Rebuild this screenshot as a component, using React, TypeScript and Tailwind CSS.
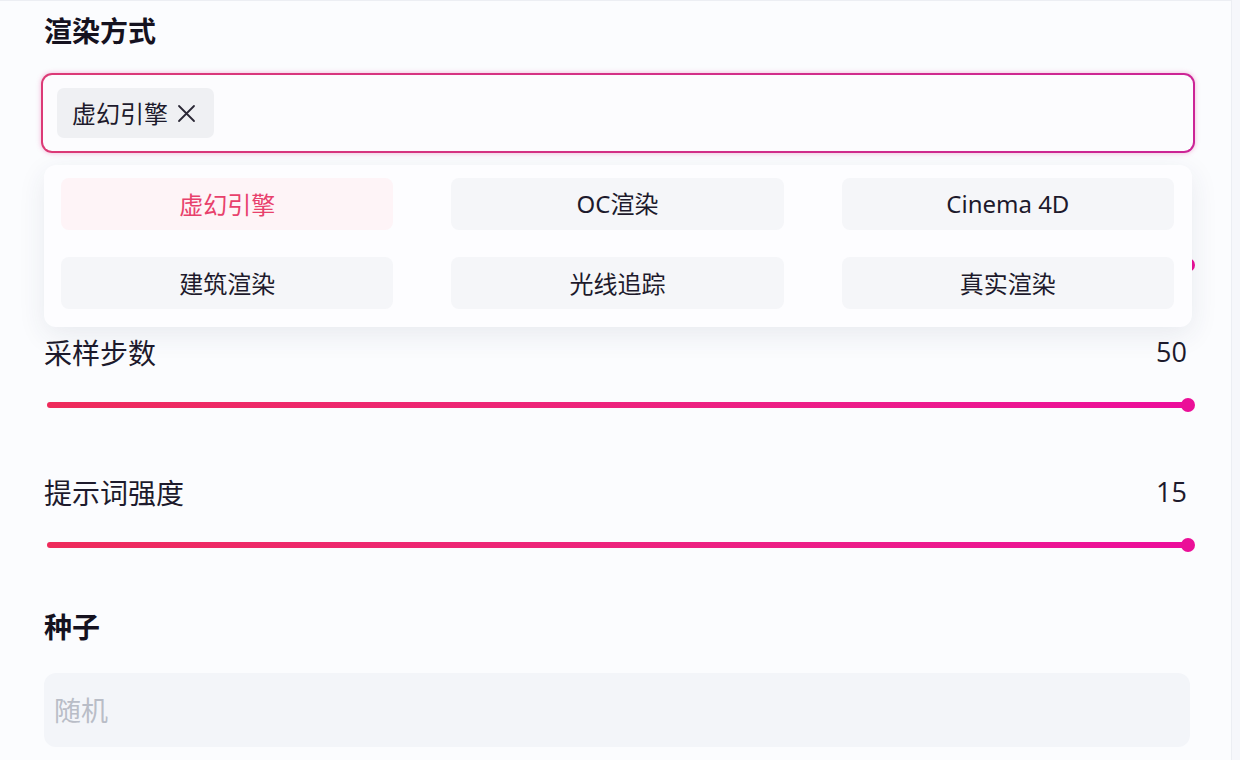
import React from "react";

const CJK = { fontFamily: '"Noto Sans CJK SC", "Noto Sans", sans-serif' };

function Slider({ label, value }: { label: string; value: string }) {
  return (
    <div className="flex flex-col">
      <div className="flex items-center justify-between h-[36px]">
        <span className="text-[28px] leading-[36px] text-[#1d1a2c]">{label}</span>
        <span className="text-[27px] leading-[36px] text-[#1d1a2c] pr-[7px]" style={{ fontFamily: '"Open Sans", "Noto Sans", sans-serif' }}>{value}</span>
      </div>
      <div className="mt-[25px] h-[20px] flex items-center pl-[3px]">
        <div className="relative flex-1 h-[6px] rounded-full bg-gradient-to-r from-[#ee2b5b] to-[#ec0c9b]">
          <div className="absolute right-[-7px] top-1/2 -translate-y-1/2 w-[14px] h-[14px] rounded-full bg-[#eb0f98]" />
        </div>
        <div className="w-[6px]" />
      </div>
    </div>
  );
}

const options = ["虚幻引擎", "OC渲染", "Cinema 4D", "建筑渲染", "光线追踪", "真实渲染"];

export default function App() {
  return (
    <div className="w-[1240px] h-[760px] bg-[#f6f7fb] overflow-hidden" style={CJK}>
      <div className="w-[1232px] h-[760px] bg-[#fbfcfe] border-t border-r border-[#eceef3] pl-[44px] pr-[37px] pt-[11px]">
        <div className="text-[28px] leading-[36px] font-bold text-[#15121f]">渲染方式</div>

        <div className="relative mt-[25px] -ml-[3px] -mr-[1px]">
          <div className="rounded-[11px] p-[2px] bg-gradient-to-r from-[#dc3a76] to-[#cc2496] shadow-[0_0_5px_rgba(225,50,140,0.35)]">
            <div className="h-[76px] rounded-[9px] bg-[#fcfcfe] pl-[14px] pt-[13px]">
              <div className="inline-flex items-center h-[50px] rounded-[7px] bg-[#eff0f3] pl-[15px] pr-[18px] gap-[9px]">
                <span className="text-[24px] text-[#1d1a2c]">虚幻引擎</span>
                <svg width="19" height="19" viewBox="0 0 19 19" fill="none" stroke="#2a2735" strokeWidth="1.8" strokeLinecap="round">
                  <path d="M2 2 L17 17 M17 2 L2 17" />
                </svg>
              </div>
            </div>
          </div>

          <div className="absolute left-[3px] right-[3px] top-[calc(100%+12px)] z-10 rounded-[12px] bg-[#fdfdff] shadow-[0_8px_28px_rgba(40,50,90,0.09)] pl-[17px] pr-[18px] pt-[13px] pb-[18px]">
            <div className="grid grid-cols-3 gap-x-[58px] gap-y-[27px]">
              {options.map((o, i) => (
                <div
                  key={o}
                  className={
                    "h-[52px] rounded-[8px] flex items-center justify-center text-[24px] " +
                    (i === 0
                      ? "bg-[#fef4f7] text-[#e8416c]"
                      : "bg-[#f5f6f9] text-[#1d1a2c]")
                  }
                  style={i === 1 || i === 2 ? { fontFamily: '"Noto Sans", "Noto Sans CJK SC", sans-serif' } : undefined}
                >
                  {o}
                </div>
              ))}
            </div>
          </div>
        </div>

        <div className="mt-[41px]">
          <Slider label="生成数量" value="4" />
        </div>
        <div className="mt-[59px]">
          <Slider label="采样步数" value="50" />
        </div>
        <div className="mt-[59px]">
          <Slider label="提示词强度" value="15" />
        </div>

        <div className="mt-[53px] text-[28px] leading-[36px] font-bold text-[#15121f]">种子</div>
        <div className="mt-[29px] h-[74px] rounded-[12px] bg-[#f3f5f9] flex items-center pl-[10px] mr-[4px]">
          <span className="text-[27px] text-[#b9bdc7]">随机</span>
        </div>
      </div>
    </div>
  );
}
